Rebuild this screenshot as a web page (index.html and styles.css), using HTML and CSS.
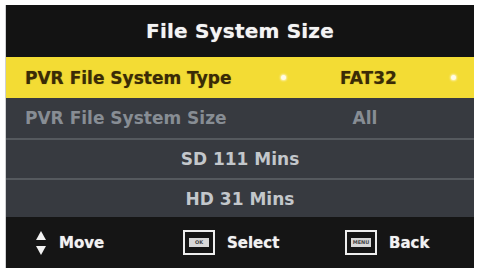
FILE: index.html
```html
<!DOCTYPE html>
<html>
<head>
<meta charset="utf-8">
<link rel="stylesheet" href="styles.css">
</head>
<body>
<div class="panel">
  <div class="title">File System Size</div>
  <div class="row row-active">
    <span class="label">PVR File System Type</span>
    <span class="value">
      <span class="dot"></span>
      <span class="val-text">FAT32</span>
      <span class="dot"></span>
    </span>
  </div>
  <div class="row row-dim">
    <span class="label">PVR File System Size</span>
    <span class="value"><span class="val-text">All</span></span>
  </div>
  <div class="row row-info sep">SD 111 Mins</div>
  <div class="row row-info sep">HD 31 Mins</div>
  <div class="footer">
    <div class="hint">
      <svg class="arrows" width="12" height="26" viewBox="0 0 12 26">
        <polygon points="6,1 11,10 1,10" fill="#f2f2f2"/>
        <polygon points="1,16 11,16 6,25" fill="#f2f2f2"/>
      </svg>
      <span>Move</span>
    </div>
    <div class="hint">
      <span class="key"><span class="key-inner">OK</span></span>
      <span>Select</span>
    </div>
    <div class="hint">
      <span class="key"><span class="key-inner">MENU</span></span>
      <span>Back</span>
    </div>
  </div>
</div>
</body>
</html>
```

FILE: styles.css
```css
html, body {
  margin: 0;
  padding: 0;
  background: #ffffff;
}
body {
  width: 479px;
  height: 274px;
  overflow: hidden;
  font-family: "DejaVu Sans", "Liberation Sans", sans-serif;
  font-weight: bold;
}
.panel {
  margin: 5px 5px 0 6px;
  width: 468px;
  height: 263px;
  display: flex;
  flex-direction: column;
  background: #373a40;
  box-shadow: -1px 0 0 #cfd0d2;
}
.title {
  height: 52px;
  background: #131313;
  color: #f4f4f4;
  font-size: 20px;
  display: flex;
  align-items: center;
  justify-content: center;
  letter-spacing: 0.2px;
  text-shadow: 0 0 1px rgba(255, 255, 255, 0.6);
}
.row {
  display: flex;
  align-items: center;
  font-size: 17px;
  box-sizing: border-box;
}
.row-active {
  height: 41px;
  background: #f3dc34;
  color: #3a2b06;
  text-shadow: 0 0 1px rgba(58, 43, 6, 0.5);
}
.row-dim {
  height: 40px;
  color: #878d94;
}
.label {
  padding-left: 19px;
  width: 250px;
  box-sizing: border-box;
}
.value {
  display: flex;
  align-items: center;
  justify-content: center;
  width: 218px;
}
.val-text {
  display: block;
}
.row-active .value {
  justify-content: space-between;
  padding: 0 18px 0 25px;
  box-sizing: border-box;
}
.dot {
  width: 5px;
  height: 5px;
  border-radius: 50%;
  background: #fffbe6;
  box-shadow: 0 0 2px 1px rgba(255, 250, 220, 0.7);
}
.row-info {
  height: 40px;
  justify-content: center;
  color: #c3c7cb;
}
.row-info + .row-info {
  height: 39px;
}
.sep {
  border-top: 2px solid #55595e;
}
.footer {
  height: 51px;
  background: #151515;
  display: grid;
  grid-template-columns: 148px 162px auto;
  align-items: center;
  padding-left: 29px;
  color: #f2f2f2;
  font-size: 15px;
  text-shadow: 0 0 1px rgba(255, 255, 255, 0.6);
}
.hint {
  display: flex;
  align-items: center;
  gap: 12px;
}
.arrows {
  display: block;
}
.key {
  width: 32px;
  height: 25px;
  box-sizing: border-box;
  border: 2px solid #eeeeee;
  display: flex;
  align-items: center;
  justify-content: center;
}
.key-inner {
  width: 20px;
  height: 9px;
  background: #d8d8d8;
  color: #444;
  font-size: 5px;
  line-height: 9px;
  text-align: center;
  letter-spacing: 0;
  overflow: hidden;
  text-shadow: none;
}
```
